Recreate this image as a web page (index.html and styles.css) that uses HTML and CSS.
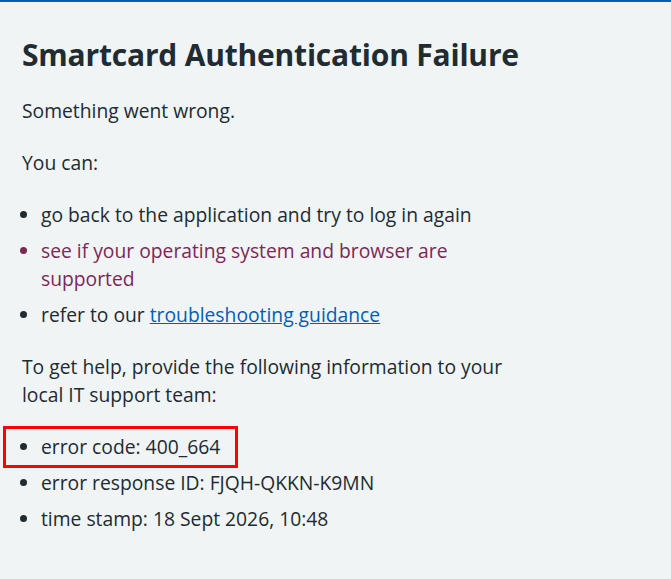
FILE: index.html
```html
<!DOCTYPE html>
<html lang="en">
<head>
<meta charset="utf-8">
<title>Smartcard Authentication Failure</title>
<link rel="stylesheet" href="styles.css">
</head>
<body>
<div class="topbar"></div>
<main class="content">
  <h1 class="title">Smartcard Authentication Failure</h1>
  <div class="body">
    <p class="para">Something went wrong.</p>
    <p class="para">You can:</p>
    <ul class="list">
      <li>go back to the application and try to log in again</li>
      <li class="visited">see if your operating system and browser are supported</li>
      <li>refer to our <a class="link" href="#">troubleshooting guidance</a></li>
    </ul>
    <p class="para">To get help, provide the following information to your local IT support team:</p>
    <ul class="list">
      <li class="highlight">error code: 400_664</li>
      <li>error response ID: FJQH-QKKN-K9MN</li>
      <li>time stamp: 18 Sept 2026, 10:48</li>
    </ul>
  </div>
</main>
</body>
</html>
```
FILE: styles.css
```css
html, body {
  margin: 0;
  padding: 0;
  background: #f0f4f5;
}
body {
  font-family: "Open Sans", "Noto Sans", sans-serif;
  color: #212b32;
  font-size: 19.3px;
  line-height: 28px;
}
.topbar {
  height: 2px;
  background: #005eb8;
}
.content {
  padding: 33px 22px 0 22px;
}
.title {
  font-size: 30px;
  line-height: 40px;
  font-weight: 700;
  letter-spacing: -0.2px;
  margin: 0 0 22px 0;
  white-space: nowrap;
}
.body {
  max-width: 500px;
}
.para {
  margin: 0 0 24px 0;
}
.list {
  margin: 0 0 24px 0;
  padding: 0 0 0 19px;
}
.list li {
  margin-bottom: 8px;
  position: relative;
}
.visited {
  color: #7c2855;
}
.link {
  color: #005eb8;
  text-decoration: underline;
}
.highlight::before {
  content: "";
  position: absolute;
  left: -38px;
  top: -7px;
  width: 229px;
  height: 36px;
  border: 3px solid #ff0000;
}
```
